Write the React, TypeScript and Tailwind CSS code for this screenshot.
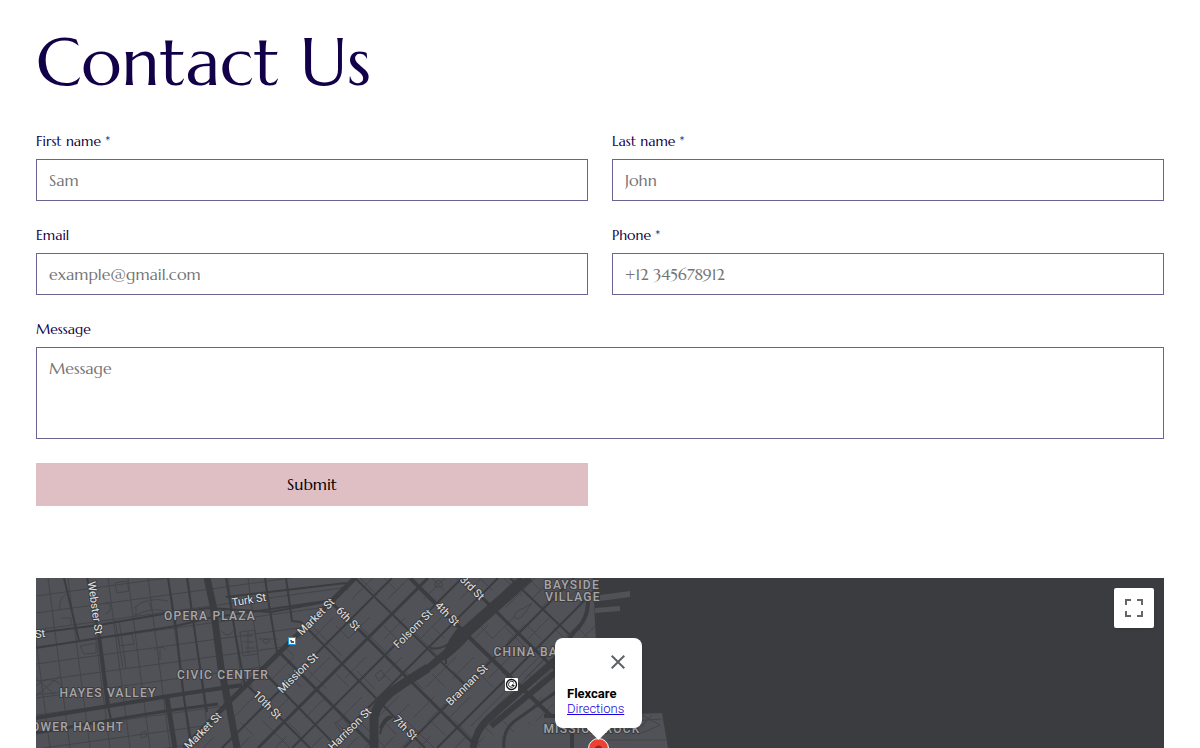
import React, { useState } from 'react';

interface FieldProps {
  id: string;
  label: string;
  placeholder: string;
  type?: string;
  required?: boolean;
}

const fieldClass =
  'block w-full border border-[#6b6490] bg-white px-3 text-base text-[#120048] placeholder-[#757575] outline-none focus:border-[#120048]';

const Field: React.FC<FieldProps> = ({ id, label, placeholder, type = 'text', required }) => (
  <div>
    <label htmlFor={id} className="mb-2 block text-sm text-[#120048]">
      {label}{required && ' *'}
    </label>
    <input id={id} name={id} type={type} placeholder={placeholder} required={required} className={`${fieldClass} h-[42px]`} />
  </div>
);

// [path, stroke width]
const roads: [string, number][] = [
  // western grid, east-west
  ['M0 55 L63 47 L133 35 L173 30 L235 34 L300 22', 2],
  ['M0 70 L63 60 L140 48 L173 40 L290 23', 2],
  ['M0 140 L73 128 L133 118 L206 107', 4],
  ['M0 155 L75 142 L130 133 L182 126', 3],
  ['M190 19 L250 12 L310 5', 2],
  // western grid, north-south
  ['M28 0 L43 63', 2],
  ['M51 0 L63 58', 2],
  ['M63 58 L72 128', 4],
  ['M72 128 L75 142', 2],
  ['M132 0 L140 50 L148 120 L156 170', 2],
  ['M131 120 L139 170', 5],
  ['M151 0 L162 76 L171 134', 2],
  ['M171 0 L177 27 L185 90 L193 128 L201 170', 7],
  ['M190 0 L200 60 L209 108', 2],
  ['M229 0 L233 27 L241 74', 2],
  ['M250 0 L256 43 L265 44', 2],
  // streets running up to the north-east
  ['M319 0 L194 123 L148 170', 5],
  ['M356 0 L186 170', 2],
  ['M392 0 L222 170', 3],
  ['M426 0 L256 170', 2],
  ['M462 0 L292 170', 2],
  ['M538 0 L368 170', 2],
  ['M559 12 L401 170', 2],
  // cross streets
  ['M207 103 L274 170', 2],
  ['M224 90 L302 170', 2],
  ['M243 74 L339 170', 3],
  ['M265 44 L389 170', 2],
  ['M296 25 L437 165', 3],
  ['M319 0 L428 106', 2],
  ['M374 0 L437 63 L515 138', 4],
  ['M426 0 L538 110', 3],
  ['M474 0 L535 58', 2],
];

const minorWest = Array.from({ length: 12 }, (_, i) => i);
const minorSoma = Array.from({ length: 22 }, (_, i) => i);

const streetLabels = [
  { text: 'Webster St', x: 59, y: 30, angle: 82 },
  { text: 'St', x: 4, y: 56, angle: -8 },
  { text: 'Turk St', x: 213, y: 22, angle: -9 },
  { text: 'Market St', x: 280, y: 39, angle: -45 },
  { text: '6th St', x: 312, y: 41, angle: 45 },
  { text: 'Mission St', x: 262, y: 95, angle: -45 },
  { text: '10th St', x: 231, y: 127, angle: 45 },
  { text: 'Market St', x: 167, y: 153, angle: -45 },
  { text: 'Harrison St', x: 314, y: 151, angle: -45 },
  { text: 'Folsom St', x: 377, y: 51, angle: -45 },
  { text: '7th St', x: 369, y: 150, angle: 45 },
  { text: '4th St', x: 411, y: 36, angle: 45 },
  { text: '3rd St', x: 436, y: 10, angle: 45 },
  { text: 'Brannan St', x: 431, y: 107, angle: -45 },
];

const areaLabels = [
  { text: 'OPERA PLAZA', x: 174, y: 42 },
  { text: 'CIVIC CENTER', x: 187, y: 101 },
  { text: 'HAYES VALLEY', x: 72, y: 119 },
  { text: 'LOWER HAIGHT', x: 38, y: 153 },
  { text: 'BAYSIDE', x: 536, y: 11 },
  { text: 'VILLAGE', x: 537, y: 23 },
  { text: 'CHINA BASIN', x: 501, y: 78 },
  { text: 'MISSION ROCK', x: 556, y: 155 },
];

const MapCanvas: React.FC = () => (
  <svg
    viewBox="0 0 1128 170"
    preserveAspectRatio="xMidYMid slice"
    className="block h-full w-full"
    role="img"
    aria-label="Map of San Francisco"
  >
    <defs>
      <clipPath id="west">
        <path d="M0 0 H319 L194 123 L148 170 H0 Z" />
      </clipPath>
      <clipPath id="soma">
        <path d="M319 0 H559 V120 L440 170 H148 L194 123 Z" />
      </clipPath>
    </defs>
    <rect width="1128" height="170" fill="#3b3c40" />
    <path d="M0 0 H557 L559 45 L562 100 L570 137 L626 135 L632 170 H0 Z" fill="#515257" />
    <path d="M564 17 L594 13 V19 L564 23 Z M559 30 L584 28 V33 L559 35 Z" fill="#515257" />

    {/* Side streets */}
    <g stroke="#434449" strokeWidth="1" fill="none" clipPath="url(#west)">
      {minorWest.map((i) => (
        <path key={`ns${i}`} d={`M${-8 + i * 20} 0 l22 170`} />
      ))}
      {minorWest.map((i) => (
        <path key={`ew${i}`} d={`M0 ${18 + i * 17} L320 ${-26 + i * 17}`} />
      ))}
      <path d="M98 30 q12 -12 34 -7 M98 38 q18 -10 34 -4 M100 28 v10 M113 24 l4 12 M24 32 q-2 -10 6 -16 M25 40 h10 v7 M68 26 q5 -4 6 2 t-4 8 M79 42 l8 48 M83 42 l7 48 M82 58 l14 -2 2 10 -14 2z" />
      <path d="M0 100 L18 116 M0 118 L24 98 M0 108 Q12 96 24 106 T0 116 M44 68 l16 -3 v10 l-12 1z M118 72 q8 -6 12 0 M124 70 v12 M185 53 q8 8 12 0" />
      <path d="M204 54 l15 -2 3 24 -15 2z M207 58 h10 M208 64 h10 M209 70 h10 M212 54 v22 M222 61 h20 M230 61 a3 2 0 1 0 0.1 0 M79 5 l12 -2 2 10 -12 2z" />
      <path d="M104 156 l5 -3 2 5 -5 2z M179 153 l12 14 M188 148 l12 14" />
    </g>
    <g stroke="#434449" strokeWidth="1" fill="none" clipPath="url(#soma)">
      {minorSoma.map((i) => (
        <path key={`ne${i}`} d={`M${337 + i * 18} 0 l-170 170`} strokeDasharray={i % 2 ? '42 24 24 22' : '30 26'} />
      ))}
      {minorSoma.map((i) => (
        <path key={`nw${i}`} d={`M${60 + i * 24} 0 l170 170`} strokeDasharray={i % 2 ? '25 45 40 22' : '18 50'} />
      ))}
      <path d="M478 39 q2 -7 10 -9 l8 -5 -8 11 q-6 8 -10 3z M339 97 l6 -5 4 6 -6 5z M299 145 l8 -5 6 9 -8 6z M399 5 q4 -5 7 0 t-7 4z" />
      <path d="M439 152 L512 78 M443 156 L516 82 M435 148 L508 74" />
    </g>
    <path d="M566 145 L626 141 M606 137 L624 147 L606 155 M572 162 H630 M616 137 L606 148" stroke="#434449" fill="none" />

    {/* Main streets */}
    <g stroke="#3b3c40" fill="none" strokeLinejoin="round">
      {roads.map(([d, width], i) => (
        <path key={i} d={d} strokeWidth={width} />
      ))}
      {/* Elevated freeway */}
      <path d="M338 170 V140 Q339 128 354 115 Q366 106 392 90" strokeWidth="9" />
      <path d="M380 99 L396 87 L418 68 L494 0" strokeWidth="7" />
      <path d="M418 60 L486 0" strokeWidth="5" />
      <path d="M410 72 Q414 62 422 52 L426 58 Q424 70 412 76 Z" fill="#3b3c40" strokeWidth="3" />
      <path d="M394 70 Q404 72 412 66 M410 80 V86 M432 60 Q424 70 408 82" strokeWidth="2" />
      <path d="M344 150 Q350 136 356 139 Q346 144 344 156" fill="#3b3c40" strokeWidth="2" />
      {/* Waterfront */}
      <path d="M437 170 Q440 152 452 141 L524 78 L540 64" strokeWidth="7" />
      <path d="M455 148 L530 86" strokeWidth="6" />
      <path d="M524 74 L538 54 Q552 42 552 23" strokeWidth="4" />
      <path d="M508 138 H570 M536 138 V170" strokeWidth="4" />
      <path d="M468 170 Q466 152 480 142 L520 114" strokeWidth="3" />
    </g>

    {/* Labels */}
    <g
      fontFamily="Roboto, sans-serif"
      textAnchor="middle"
      stroke="#3b3c40"
      strokeWidth="2"
      strokeLinejoin="round"
      paintOrder="stroke"
    >
      {areaLabels.map((label) => (
        <text key={label.text} x={label.x} y={label.y} fill="#a6a6a9" fontSize="12" fontWeight="500" className="tracking-widest">
          {label.text}
        </text>
      ))}
      {streetLabels.map((label, i) => (
        <text
          key={i}
          fill="#e3e3e3"
          fontSize="11"
          dominantBaseline="central"
          transform={`translate(${label.x} ${label.y}) rotate(${label.angle})`}
        >
          {label.text}
        </text>
      ))}
    </g>

    {/* Transit stops */}
    <rect x="252.500" y="59.500" width="7" height="7" fill="#fff" stroke="#1a9be6" />
    <path d="M254 62 h2 v1 h2 v2 h-3z" fill="#4f5660" />
    <rect x="469" y="100" width="13" height="13" rx="1" fill="#fff" />
    <circle cx="475.500" cy="106.500" r="5" fill="#fff" stroke="#111" strokeWidth="1.300" />
    <path d="M478 104.500 a3 3 0 1 0 0.300 3 h-2.500 l2 -2" fill="none" stroke="#222" strokeWidth="1" />

    {/* Location pin */}
    <path d="M562.500 160.500 a10 10 0 0 1 10 10 c0 8 -9 11 -10 20 c-1 -9 -10 -12 -10 -20 a10 10 0 0 1 10 -10z" fill="#ea4335" stroke="#fff" strokeWidth="1" />
    <circle cx="562.500" cy="171" r="3.500" fill="#b31412" />
  </svg>
);

const LocationMap: React.FC = () => {
  const [showInfo, setShowInfo] = useState(true);

  return (
    <div className="relative mt-[72px] h-[170px] overflow-hidden bg-[#3b3c40] font-[Roboto,sans-serif]">
      <MapCanvas />

      {showInfo && (
        <div className="absolute top-[60px] left-1/2 -ml-[45px] w-[87px]">
          <div className="h-[90px] rounded-lg bg-white px-3 shadow-md">
            <div className="flex h-12 items-center justify-end">
              <button type="button" aria-label="Close" onClick={() => setShowInfo(false)} className="text-[#5f6368]">
                <svg width="24" height="24" viewBox="0 0 24 24" fill="currentColor">
                  <path d="M19 6.410 17.590 5 12 10.590 6.410 5 5 6.410 10.590 12 5 17.590 6.410 19 12 13.410 17.590 19 19 17.590 13.410 12z" />
                </svg>
              </button>
            </div>
            <div className="text-[13px] leading-[15px] text-black">
              <p className="font-bold">Flexcare</p>
              <a href="#directions" className="font-light text-[#1800e0] underline">Directions</a>
            </div>
          </div>
          <div className="mx-auto h-3 w-6 bg-white [clip-path:polygon(0_0,100%_0,50%_100%)]" />
        </div>
      )}

      <button
        type="button"
        aria-label="Toggle fullscreen view"
        className="absolute top-[10px] right-[10px] flex h-10 w-10 items-center justify-center rounded-xs bg-white text-[#666666] shadow"
      >
        <svg width="18" height="18" viewBox="0 0 18 18" fill="currentColor">
          <path d="M0 0v6h2V2h4V0H0zm16 0h-4v2h4v4h2V0h-2zm0 16h-4v2h6v-6h-2v4zM2 12H0v6h6v-2H2v-4z" />
        </svg>
      </button>
    </div>
  );
};

const App: React.FC = () => {
  return (
    <main className="bg-white px-9 pt-6 font-[Marcellus,Lato,sans-serif]">
      <h1 className="text-[67px] leading-[76px] text-[#120048]">Contact Us</h1>

      <form className="mt-[31px] grid grid-cols-2 gap-6" onSubmit={(e) => e.preventDefault()}>
        <Field id="first-name" label="First name" placeholder="Sam" required />
        <Field id="last-name" label="Last name" placeholder="John" required />
        <Field id="email" label="Email" placeholder="example@gmail.com" type="email" />
        <Field id="phone" label="Phone" placeholder="+12 345678912" type="tel" required />
        <div className="col-span-2">
          <label htmlFor="message" className="mb-2 block text-sm text-[#120048]">
            Message
          </label>
          <textarea id="message" name="message" placeholder="Message" className={`${fieldClass} h-[92px] resize-none py-2`} />
        </div>
        <button type="submit" className="h-[43px] bg-[#dfbfc4] pb-0.5 text-base text-black">
          Submit
        </button>
      </form>

      <LocationMap />
    </main>
  );
};

export default App;
